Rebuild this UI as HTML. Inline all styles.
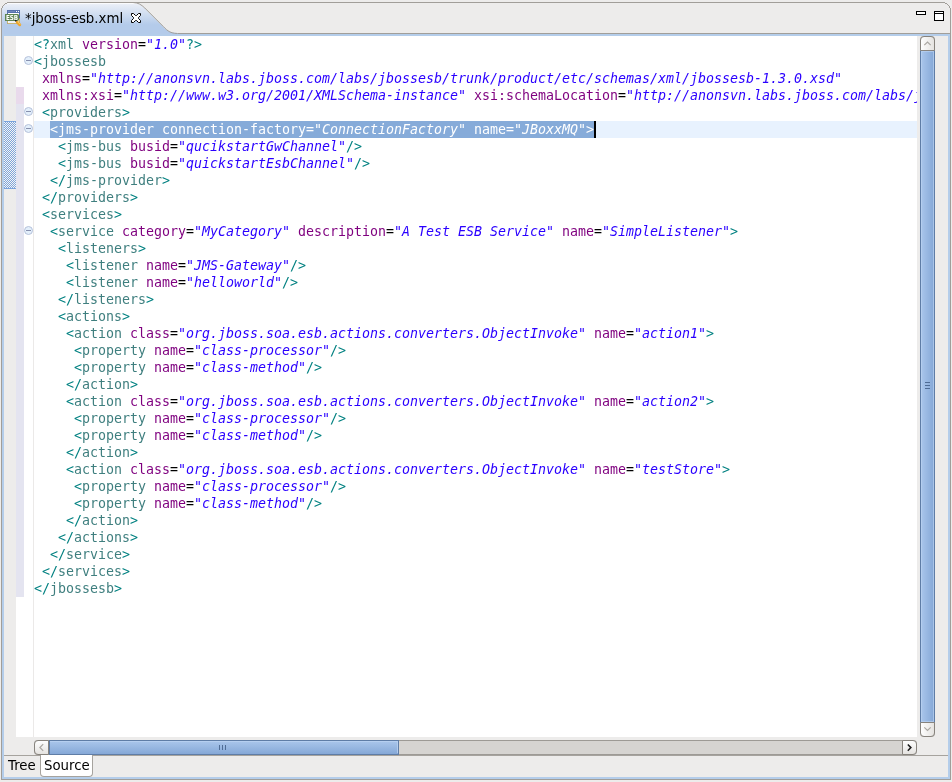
<!DOCTYPE html>
<html><head><meta charset="utf-8"><title>jboss-esb.xml</title>
<style>
html,body{margin:0;padding:0}
body{width:952px;height:782px;background:#edeceb;position:relative;overflow:hidden;font-family:"DejaVu Sans","Liberation Sans",sans-serif;font-size:13.33px;color:#000}
.abs{position:absolute}
#frame{position:absolute;left:1px;top:9px;width:948px;height:770px;border:1px solid #a19e99;border-top:none;background:#edeceb}
#blue{position:absolute;left:2px;top:34px;width:944px;height:741px;border:2px solid #b4cdea;background:#edeceb}
#tabline{position:absolute;left:2px;top:33px;width:948px;height:1px;background:#a19e99}
#tabsvg{position:absolute;left:0;top:0;will-change:transform}
#tabtitle{will-change:transform;position:absolute;left:25px;top:10px;font-size:13.33px;line-height:17px;white-space:nowrap}
#editor{position:absolute;left:34px;top:36px;width:883px;height:701px;background:#fff;overflow:hidden}
#fold{position:absolute;left:24px;top:36px;width:9px;height:701px;background:#fff}
#sep{position:absolute;left:33px;top:36px;width:1px;height:701px;background:#ebe9e8}
#chg{position:absolute;left:16px;top:36px;width:8px;height:701px;background:#fff}
#ruler{position:absolute;left:4px;top:36px;width:12px;height:701px;background:#edeceb}
.ln{height:17px;line-height:17px;white-space:pre;font-family:"DejaVu Sans Mono","Liberation Mono",monospace;font-size:13.295px;letter-spacing:0.0037px;position:relative}
.ln i{color:#2a00ff;font-style:italic}
.d{color:#008080}.t{color:#3f7f7f}.a{color:#7f007f}.e{color:#000}.q{color:#2a00ff}
.cur{background:#e8f2fe;width:2000px}
.sel{background:#86abd9;color:#fff;display:inline-block;height:17px}
.sel i{color:#fff}
.caret{display:inline-block;width:2px;height:17px;background:#000;vertical-align:top;margin-left:0}
.fold{position:absolute;left:24px;width:7px;height:7px;border:1px solid #b6c2db;border-radius:50%;background:#e3effb}
.fold:after{content:"";position:absolute;left:1px;top:3px;width:5px;height:1px;background:#8790ae}

#minb{position:absolute;left:916px;top:11px;width:8px;height:2px;border:1px solid #000;background:#fff}
#maxb{position:absolute;left:934px;top:11px;width:8px;height:8px;border:1px solid #000;background:#fff}
#maxb:after{content:'';position:absolute;left:0;top:1px;width:8px;height:1px;background:#000}
#vs{position:absolute;left:920px;top:36px;width:15px;height:701px}
#hs{position:absolute;left:34px;top:740px;width:883px;height:15px}
#botline{position:absolute;left:4px;top:755px;width:944px;height:1px;background:#a6a39e}
#srctab{position:absolute;left:40px;top:755px;width:51px;height:21px;background:#fff;border:1px solid #a6a39e;border-top:none;border-radius:0 0 4px 4px}
#treetxt{will-change:transform;position:absolute;left:8px;top:757px;line-height:17px;font-size:13.33px}
#srctxt{will-change:transform;position:absolute;left:44px;top:757px;line-height:17px;font-size:13.33px}
#pink{position:absolute;left:16px;top:87px;width:8px;height:17px;background:#e9daec}
#lav{position:absolute;left:16px;top:104px;width:8px;height:493px;background:#e4e4f0}
#range{position:absolute;left:4px;top:121px;width:12px;height:68px;background:#c4d5ee}
#txt{will-change:transform;position:absolute;left:0;top:0;width:2000px}
</style></head><body>
<div id="frame"></div>
<div id="tabline"></div>
<svg id="tabsvg" width="952" height="40" viewBox="0 0 952 40">
<defs><linearGradient id="tg" x1="0" y1="0" x2="0" y2="1"><stop offset="0" stop-color="#ffffff"/><stop offset="0.035" stop-color="#f4f7fb"/><stop offset="0.05" stop-color="#e9eef7"/><stop offset="0.70" stop-color="#b4cbea"/><stop offset="1" stop-color="#b4cbea"/></linearGradient></defs>
<path d="M2,34 L2,9 L3,7 L3,6.5 L6,4 L8,3 L133,3 C138.5,3.3 141,5 144.8,8.5 L161.8,25.5 C166,29.6 169,33 177.5,33 L178,34 Z" fill="url(#tg)"/>
<path d="M1.5,10 L1.5,8.5 L2.5,7.5 L2.5,6.5 L5.5,3.5 L6.5,3.5 L7.5,2.5 L944.5,2.5 L945.5,3.5 L946.5,3.5 L949.5,6.5 L949.5,7.5 L950.5,8.5 L950.5,10" fill="none" stroke="#a19e99" stroke-width="1" shape-rendering="crispEdges"/>
<path d="M133,2.5 C138.5,2.8 141,4.5 144.8,8 L161.8,25 C166,29.1 169,33.5 177.5,33.5" fill="none" stroke="#a19e99" stroke-width="1"/>
<path d="M131.5,13.5 h2 l2,2 h1 l2,-2 h2 v2 l-2,2 v1 l2,2 v2 h-2 l-2,-2 h-1 l-2,2 h-2 v-2 l2,-2 v-1 l-2,-2 Z" fill="#fff" stroke="#000" stroke-width="1"/>
<g transform="translate(5,10)">
<rect x="2.5" y="2.5" width="12" height="11" fill="#fff" stroke="#5873ad" stroke-width="1"/>
<path d="M2.5,10 V13.5 H14.5 V8.5" fill="none" stroke="#cdb671" stroke-width="1"/>
<rect x="2" y="0" width="13" height="3" fill="#5873ad"/>
<rect x="3" y="1" width="7" height="1" fill="#7088bd"/>
<rect x="11" y="1" width="1" height="1" fill="#fff"/><rect x="13" y="1" width="1" height="1" fill="#fff"/>
<rect x="3.5" y="11.5" width="7" height="1" fill="#dfe6f3"/>
<path d="M0,4 H13 L14,5 V10 L13,11 H0 Z" fill="#5e8452"/>
<text x="0.9" y="10" font-family="'DejaVu Sans','Liberation Sans',sans-serif" font-weight="bold" font-size="6.9px" fill="#fff" textLength="12.2" lengthAdjust="spacingAndGlyphs">ESB</text>
<path d="M10.2,10.2 L11.8,11.8" stroke="#111" stroke-width="1.5"/>
<path d="M12.3,12.3 L14.7,14.7" stroke="#eea52a" stroke-width="3" stroke-linecap="round"/>
<path d="M12.8,11.9 L15,14.1" stroke="#f8d477" stroke-width="0.9" stroke-linecap="round"/>
</g>
</svg>
<div id="blue"></div>
<div id="tabtitle">*jboss-esb.xml</div>
<div id="ruler"></div><div id="chg"></div><div id="fold"></div><div id="sep"></div>
<div id="editor"><div id="txt">
<div class="ln"><span class="d">&lt;?</span><span class="t">xml</span> <span class="a">version</span><span class="e">=</span><span class="q">"</span><i>1.0</i><span class="q">"</span><span class="d">?&gt;</span></div>
<div class="ln"><span class="d">&lt;</span><span class="t">jbossesb</span></div>
<div class="ln"> <span class="a">xmlns</span><span class="e">=</span><span class="q">"</span><i>http://anonsvn.labs.jboss.com/labs/jbossesb/trunk/product/etc/schemas/xml/jbossesb-1.3.0.xsd</i><span class="q">"</span></div>
<div class="ln"> <span class="a">xmlns:xsi</span><span class="e">=</span><span class="q">"</span><i>http://www.w3.org/2001/XMLSchema-instance</i><span class="q">"</span> <span class="a">xsi:schemaLocation</span><span class="e">=</span><span class="q">"</span><i>http://anonsvn.labs.jboss.com/labs/jbossesb/trunk/product/etc/schemas/xml/jbossesb-1.3.0.xsd</i><span class="q">"</span></div>
<div class="ln"> <span class="d">&lt;</span><span class="t">providers</span><span class="d">&gt;</span></div>
<div class="ln cur">  <span class="sel">&lt;jms-provider connection-factory="<i>ConnectionFactory</i>" name="<i>JBoxxMQ</i>"&gt;</span><span class="caret"></span></div>
<div class="ln">   <span class="d">&lt;</span><span class="t">jms-bus</span> <span class="a">busid</span><span class="e">=</span><span class="q">"</span><i>qucikstartGwChannel</i><span class="q">"</span><span class="d">/&gt;</span></div>
<div class="ln">   <span class="d">&lt;</span><span class="t">jms-bus</span> <span class="a">busid</span><span class="e">=</span><span class="q">"</span><i>quickstartEsbChannel</i><span class="q">"</span><span class="d">/&gt;</span></div>
<div class="ln">  <span class="d">&lt;/</span><span class="t">jms-provider</span><span class="d">&gt;</span></div>
<div class="ln"> <span class="d">&lt;/</span><span class="t">providers</span><span class="d">&gt;</span></div>
<div class="ln"> <span class="d">&lt;</span><span class="t">services</span><span class="d">&gt;</span></div>
<div class="ln">  <span class="d">&lt;</span><span class="t">service</span> <span class="a">category</span><span class="e">=</span><span class="q">"</span><i>MyCategory</i><span class="q">"</span> <span class="a">description</span><span class="e">=</span><span class="q">"</span><i>A Test ESB Service</i><span class="q">"</span> <span class="a">name</span><span class="e">=</span><span class="q">"</span><i>SimpleListener</i><span class="q">"</span><span class="d">&gt;</span></div>
<div class="ln">   <span class="d">&lt;</span><span class="t">listeners</span><span class="d">&gt;</span></div>
<div class="ln">    <span class="d">&lt;</span><span class="t">listener</span> <span class="a">name</span><span class="e">=</span><span class="q">"</span><i>JMS-Gateway</i><span class="q">"</span><span class="d">/&gt;</span></div>
<div class="ln">    <span class="d">&lt;</span><span class="t">listener</span> <span class="a">name</span><span class="e">=</span><span class="q">"</span><i>helloworld</i><span class="q">"</span><span class="d">/&gt;</span></div>
<div class="ln">   <span class="d">&lt;/</span><span class="t">listeners</span><span class="d">&gt;</span></div>
<div class="ln">   <span class="d">&lt;</span><span class="t">actions</span><span class="d">&gt;</span></div>
<div class="ln">    <span class="d">&lt;</span><span class="t">action</span> <span class="a">class</span><span class="e">=</span><span class="q">"</span><i>org.jboss.soa.esb.actions.converters.ObjectInvoke</i><span class="q">"</span> <span class="a">name</span><span class="e">=</span><span class="q">"</span><i>action1</i><span class="q">"</span><span class="d">&gt;</span></div>
<div class="ln">     <span class="d">&lt;</span><span class="t">property</span> <span class="a">name</span><span class="e">=</span><span class="q">"</span><i>class-processor</i><span class="q">"</span><span class="d">/&gt;</span></div>
<div class="ln">     <span class="d">&lt;</span><span class="t">property</span> <span class="a">name</span><span class="e">=</span><span class="q">"</span><i>class-method</i><span class="q">"</span><span class="d">/&gt;</span></div>
<div class="ln">    <span class="d">&lt;/</span><span class="t">action</span><span class="d">&gt;</span></div>
<div class="ln">    <span class="d">&lt;</span><span class="t">action</span> <span class="a">class</span><span class="e">=</span><span class="q">"</span><i>org.jboss.soa.esb.actions.converters.ObjectInvoke</i><span class="q">"</span> <span class="a">name</span><span class="e">=</span><span class="q">"</span><i>action2</i><span class="q">"</span><span class="d">&gt;</span></div>
<div class="ln">     <span class="d">&lt;</span><span class="t">property</span> <span class="a">name</span><span class="e">=</span><span class="q">"</span><i>class-processor</i><span class="q">"</span><span class="d">/&gt;</span></div>
<div class="ln">     <span class="d">&lt;</span><span class="t">property</span> <span class="a">name</span><span class="e">=</span><span class="q">"</span><i>class-method</i><span class="q">"</span><span class="d">/&gt;</span></div>
<div class="ln">    <span class="d">&lt;/</span><span class="t">action</span><span class="d">&gt;</span></div>
<div class="ln">    <span class="d">&lt;</span><span class="t">action</span> <span class="a">class</span><span class="e">=</span><span class="q">"</span><i>org.jboss.soa.esb.actions.converters.ObjectInvoke</i><span class="q">"</span> <span class="a">name</span><span class="e">=</span><span class="q">"</span><i>testStore</i><span class="q">"</span><span class="d">&gt;</span></div>
<div class="ln">     <span class="d">&lt;</span><span class="t">property</span> <span class="a">name</span><span class="e">=</span><span class="q">"</span><i>class-processor</i><span class="q">"</span><span class="d">/&gt;</span></div>
<div class="ln">     <span class="d">&lt;</span><span class="t">property</span> <span class="a">name</span><span class="e">=</span><span class="q">"</span><i>class-method</i><span class="q">"</span><span class="d">/&gt;</span></div>
<div class="ln">    <span class="d">&lt;/</span><span class="t">action</span><span class="d">&gt;</span></div>
<div class="ln">   <span class="d">&lt;/</span><span class="t">actions</span><span class="d">&gt;</span></div>
<div class="ln">  <span class="d">&lt;/</span><span class="t">service</span><span class="d">&gt;</span></div>
<div class="ln"> <span class="d">&lt;/</span><span class="t">services</span><span class="d">&gt;</span></div>
<div class="ln"><span class="d">&lt;/</span><span class="t">jbossesb</span><span class="d">&gt;</span></div>
</div></div>
<div class="fold" style="top:56px"></div><div class="fold" style="top:107px"></div><div class="fold" style="top:124px"></div><div class="fold" style="top:226px"></div>
<div id="pink"></div><div id="lav"></div>
<svg id="range" width="12" height="68"><defs><pattern id="ck" width="2" height="2" patternUnits="userSpaceOnUse"><rect width="2" height="2" fill="#f7f5f2"/><rect width="1" height="1" fill="#7ba3dc"/><rect x="1" y="1" width="1" height="1" fill="#7ba3dc"/></pattern></defs><rect width="12" height="68" fill="url(#ck)"/><rect width="12" height="1" fill="#7ba3dc"/><rect y="67" width="12" height="1" fill="#7ba3dc"/></svg>
<div id="minb"></div><div id="maxb"></div>
<svg id="vs" width="15" height="701" viewBox="0 0 15 701">
<defs>
<linearGradient id="vth" x1="0" y1="0" x2="1" y2="0"><stop offset="0" stop-color="#abc7ec"/><stop offset="1" stop-color="#84a7d6"/></linearGradient>
<linearGradient id="btn" x1="0" y1="0" x2="1" y2="0"><stop offset="0" stop-color="#ffffff"/><stop offset="1" stop-color="#e4e2df"/></linearGradient>
</defs>
<rect x="0.5" y="0.5" width="14" height="700" rx="3" fill="#d6d4d1" stroke="#9d9a95"/>
<rect x="0.5" y="14.5" width="14" height="672" fill="url(#vth)" stroke="#5f7da6"/><rect x="1.5" y="15.5" width="12" height="670" fill="none" stroke="#b9d1f1" stroke-opacity="0.7"/>
<path d="M0.5,14.5 L0.5,4 Q0.5,0.5 4,0.5 L11,0.5 Q14.5,0.5 14.5,4 L14.5,14.5 Z" fill="url(#btn)" stroke="#87837d"/>
<path d="M0.5,686.5 L0.5,697 Q0.5,700.5 4,700.5 L11,700.5 Q14.5,700.5 14.5,697 L14.5,686.5 Z" fill="url(#btn)" stroke="#87837d"/>
<path d="M4.3,9.1 L7.5,6.1 L10.7,9.1" fill="none" stroke="#aaa7a2" stroke-width="1.2"/>
<path d="M4.3,691.4 L7.5,694.4 L10.7,691.4" fill="none" stroke="#aaa7a2" stroke-width="1.2"/>
<path d="M5,346.5 H10 M5,349.5 H10 M5,352.5 H10" stroke="#4f6c95" stroke-width="1"/>
</svg>
<svg id="hs" width="883" height="15" viewBox="0 0 883 15">
<defs>
<linearGradient id="hth" x1="0" y1="0" x2="0" y2="1"><stop offset="0" stop-color="#abc7ec"/><stop offset="1" stop-color="#84a7d6"/></linearGradient>
<linearGradient id="hbtn" x1="0" y1="0" x2="0" y2="1"><stop offset="0" stop-color="#ffffff"/><stop offset="1" stop-color="#e4e2df"/></linearGradient>
</defs>
<rect x="0.5" y="0.5" width="882" height="14" rx="3" fill="#d6d4d1" stroke="#9d9a95"/>
<rect x="15.5" y="0.5" width="349" height="14" fill="url(#hth)" stroke="#5f7da6"/><path d="M16,1.5 H364 M363.5,2 V13" stroke="#b9d1f1" stroke-opacity="0.8" fill="none"/>
<path d="M14.5,0.5 L4,0.5 Q0.5,0.5 0.5,4 L0.5,11 Q0.5,14.5 4,14.5 L14.5,14.5 Z" fill="url(#hbtn)" stroke="#87837d"/>
<path d="M868.5,0.5 L879,0.5 Q882.5,0.5 882.5,4 L882.5,11 Q882.5,14.5 879,14.5 L868.5,14.5 Z" fill="url(#hbtn)" stroke="#87837d"/>
<path d="M9.2,4.2 L5.9,7.5 L9.2,10.8" fill="none" stroke="#aaa7a2" stroke-width="1.2"/>
<path d="M873.8,4.5 L876.9,7.6 L873.8,10.7" fill="none" stroke="#1a1a1a" stroke-width="1.5"/>
<path d="M185.5,5 V10 M188.5,5 V10 M191.5,5 V10" stroke="#4f6c95" stroke-width="1"/>
</svg>
<div id="botline"></div><div id="srctab"></div>
<div id="treetxt">Tree</div><div id="srctxt">Source</div>

</body></html>
